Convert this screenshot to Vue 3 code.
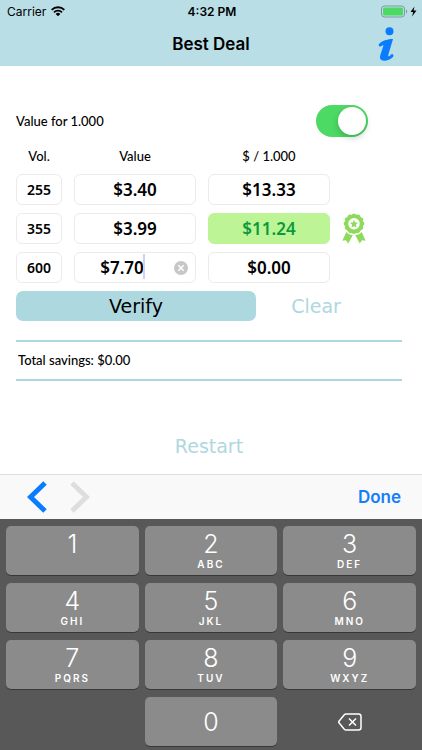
<template>
  <div class="screen">
    <header class="top">
      <div class="status">
        <span class="carrier">
          Carrier
          <svg width="14" height="11" viewBox="0 0 42 33" aria-hidden="true">
            <g fill="none" stroke="#000" stroke-width="5.5">
              <path d="M2 11.500A27 27 0 0 1 40 11.500" />
              <path d="M9 19A17 17 0 0 1 33 19" />
            </g>
            <path d="M14 24A10 10 0 0 1 28 24L21 31Z" />
          </svg>
        </span>
        <span class="time">4:32 PM</span>
        <span class="power">
          <svg width="36" height="13" viewBox="0 0 36 13" aria-hidden="true">
            <rect x="0.500" y="1" width="23" height="11" rx="3" fill="none" stroke="#7f999e" />
            <rect x="2" y="2.500" width="20" height="8" rx="1.500" fill="#4cd964" />
            <path d="M25 4.500C26.600 5 26.600 8 25 8.500Z" fill="#7f999e" />
            <path d="M33.500 1.500L29.500 7H32.200L31 11.500L35.500 5.500H32.600Z" />
          </svg>
        </span>
      </div>
      <div class="nav">
        <h1>Best Deal</h1>
        <button class="info" type="button" aria-label="Info">
          <svg width="16" height="34" viewBox="0 0 48 102" fill="#0a7cff">
            <circle cx="34.500" cy="13" r="12" />
            <path d="M2 53C8 43 25 36 45 36L31 83C30 88 32 89 36 86C39 83 41 80 44 82C47 84 47 88 44 91C37 98 28 101 19 101C7 101 4 94 7 84L15 60C17 54 16 53 12 56C6 60 1 58 2 53Z" />
          </svg>
        </button>
      </div>
    </header>

    <main>
      <div class="unit-row">
        <label for="unit">Value for 1.000</label>
        <input id="unit" v-model="perUnit" class="switch" type="checkbox" role="switch" />
      </div>

      <table>
        <colgroup>
          <col class="col-vol" />
          <col />
          <col />
          <col class="col-badge" />
        </colgroup>
        <thead>
          <tr>
            <th scope="col">Vol.</th>
            <th scope="col">Value</th>
            <th scope="col">$ / 1.000</th>
            <td></td>
          </tr>
        </thead>
        <tbody>
          <tr v-for="(row, i) in rows" :key="i">
            <td>
              <input v-model="row.vol" class="box vol" :aria-label="'Vol. ' + (i + 1)" />
            </td>
            <td>
              <div class="field">
                <input
                  v-model="row.value"
                  class="box"
                  :class="{ editing: i === active }"
                  :aria-label="'Value ' + (i + 1)"
                  @focus="active = i"
                />
                <template v-if="i === active">
                  <span class="caret"></span>
                  <button class="erase" type="button" aria-label="Erase" @click="row.value = ''">
                    <svg width="14" height="14" viewBox="0 0 14 14">
                      <circle cx="7" cy="7" r="7" fill="#c7c7c9" />
                      <path d="M4.300 4.300L9.700 9.700M9.700 4.300L4.300 9.700" stroke="#fff" stroke-width="1.500" />
                    </svg>
                  </button>
                </template>
              </div>
            </td>
            <td>
              <output class="box" :class="{ best: row.best }">{{ row.price }}</output>
            </td>
            <td>
              <svg v-if="row.best" class="rosette" width="24" height="31" viewBox="0 0 73 93" fill="#8edb5b" aria-hidden="true">
                <path d="M13 57L1 84L12 82L19 92L33 66C25 67 19 63 13 57Z" />
                <path d="M60 57L72 84L61 82L54 92L40 66C48 67 54 63 60 57Z" />
                <circle cx="36.500" cy="32" r="32" fill="#fff" />
                <circle cx="36.500" cy="32" r="29" />
                <circle v-for="(p, n) in petals" :key="n" :cx="p.x" :cy="p.y" r="6.5" />
                <circle cx="36.500" cy="32" r="17.500" fill="#fff" />
                <path d="M36.500 20L40 28L49 29L42.500 35L44 43.500L36.500 39.500L29 43.500L30.500 35L24 29L33 28Z" />
              </svg>
            </td>
          </tr>
        </tbody>
      </table>

      <div class="actions">
        <button class="verify" type="button">Verify</button>
        <button class="plain clear" type="button">Clear</button>
      </div>

      <p class="total">Total savings: $0.00</p>

      <button class="plain restart" type="button">Restart</button>
    </main>

    <div class="toolbar">
      <button type="button" aria-label="Previous" @click="move(-1)">
        <svg width="20" height="32" viewBox="0 0 20 32">
          <path d="M18 2L3.500 16L18 30" fill="none" stroke="#0a7cff" stroke-width="5" />
        </svg>
      </button>
      <button type="button" aria-label="Next" @click="move(1)">
        <svg width="20" height="32" viewBox="0 0 20 32">
          <path d="M2 2L16.500 16L2 30" fill="none" stroke="#dedede" stroke-width="5" />
        </svg>
      </button>
      <button class="done" type="button">Done</button>
    </div>

    <div class="keyboard">
      <button v-for="key in keys" :key="key.digit" class="key" type="button" @click="type(key.digit)">
        <span class="digit">{{ key.digit }}</span>
        <span class="letters">{{ key.letters }}</span>
      </button>
      <span></span>
      <button class="key zero" type="button" @click="type('0')">
        <span class="digit">0</span>
      </button>
      <button class="delete" type="button" aria-label="Delete" @click="erase">
        <svg width="24" height="18" viewBox="0 0 24 18" fill="none" stroke="#fff" stroke-width="1.500">
          <path d="M8 1H20.500Q23 1 23 3.500V14.500Q23 17 20.500 17H8Q7 17 6.300 16.200L1 9.800Q0.500 9 1 8.200L6.300 1.800Q7 1 8 1Z" />
          <path d="M11 5.500L18 12.500M18 5.500L11 12.500" />
        </svg>
      </button>
    </div>
  </div>
</template>

<script setup>
import { ref } from 'vue'

const perUnit = ref(true)
const active = ref(2)

const rows = ref([
  { vol: '255', value: '$3.40', price: '$13.33', best: false },
  { vol: '355', value: '$3.99', price: '$11.24', best: true },
  { vol: '600', value: '$7.70', price: '$0.00', best: false }
])

const keys = [
  { digit: '1', letters: '' },
  { digit: '2', letters: 'ABC' },
  { digit: '3', letters: 'DEF' },
  { digit: '4', letters: 'GHI' },
  { digit: '5', letters: 'JKL' },
  { digit: '6', letters: 'MNO' },
  { digit: '7', letters: 'PQRS' },
  { digit: '8', letters: 'TUV' },
  { digit: '9', letters: 'WXYZ' }
]

// scalloped edge of the rosette
const petals = Array.from({ length: 12 }, (_, n) => ({
  x: 36.5 + 25 * Math.cos((n * Math.PI) / 6),
  y: 32 + 25 * Math.sin((n * Math.PI) / 6)
}))

function move(step) {
  active.value = Math.min(rows.value.length - 1, Math.max(0, active.value + step))
}

function type(digit) {
  rows.value[active.value].value += digit
}

function erase() {
  const row = rows.value[active.value]
  row.value = row.value.slice(0, -1)
}
</script>

<style>
body {
  margin: 0;
  background: #fff;
}
</style>

<style scoped>
.screen {
  min-height: 100vh;
  display: flex;
  flex-direction: column;
  font-family: Inter, "Liberation Sans", sans-serif;
  color: #000;
}

button {
  font: inherit;
  color: inherit;
  background: none;
  border: none;
  padding: 0;
  cursor: pointer;
}

svg { display: block; }

.top { background: #b9dee6; }

.status {
  display: grid;
  grid-template-columns: 1fr auto 1fr;
  align-items: center;
  height: 22px;
  padding: 0 5px 0 7px;
  font-size: 12px;
}

.carrier {
  display: flex;
  align-items: center;
  gap: 5px;
}

.time { font-weight: 600; }
.power { justify-self: end; }

.nav {
  display: grid;
  grid-template-columns: 1fr auto 1fr;
  align-items: center;
  height: 44px;
  padding: 0 28px;
}

h1 {
  grid-column: 2;
  margin: 0;
  font-size: 17px;
  font-weight: 600;
}

.info { justify-self: end; }

main {
  flex: 1;
  padding: 39px 20px 0 16px;
  font-family: Lato, "Noto Sans", sans-serif;
  font-size: 13px;
  font-weight: 500;
}

.unit-row {
  display: flex;
  justify-content: space-between;
  align-items: center;
  padding-right: 34px;
}

.switch {
  appearance: none;
  width: 52px;
  height: 32px;
  margin: 0;
  padding: 2px;
  display: flex;
  justify-content: flex-start;
  border-radius: 16px;
  background: #e5e5ea;
}

.switch::before {
  content: "";
  width: 28px;
  height: 28px;
  border-radius: 50%;
  background: #fff;
  box-shadow: 0 3px 6px rgba(0, 0, 0, 0.2);
}

.switch:checked {
  justify-content: flex-end;
  background: #4cd964;
}

table {
  width: 100%;
  table-layout: fixed;
  border-collapse: collapse;
}

.col-vol { width: 58px; }
.col-badge { width: 60px; }

th {
  height: 37px;
  padding: 0 12px 0 0;
  font-weight: 500;
}

td {
  padding: 0 12px 8px 0;
  vertical-align: top;
}

.box {
  display: block;
  box-sizing: border-box;
  width: 100%;
  height: 31px;
  padding: 0 4px;
  border: 1px solid #ebebeb;
  border-radius: 6px;
  background: #fff;
  font-family: "Noto Sans", sans-serif;
  font-size: 17px;
  font-weight: 600;
  line-height: 29px;
  text-align: center;
  color: #000;
  outline: none;
}

.vol { font-size: 14px; }

.best {
  border-color: #bdf596;
  background: #bdf596;
  color: #0c9a3c;
}

.field { position: relative; }
.editing { padding-right: 30px; }

.caret {
  position: absolute;
  top: 2px;
  left: calc(50% + 8px);
  width: 2px;
  height: 25px;
  background: #ccd2f8;
}

.erase {
  position: absolute;
  top: 9px;
  right: 8px;
}

.actions {
  display: flex;
  padding-right: 26px;
  font-family: "DejaVu Sans", sans-serif;
  font-size: 19px;
}

.verify {
  flex: 2;
  height: 30px;
  border-radius: 7px;
  background: #aed8e0;
}

.plain { color: #aed8e0; }
.clear { flex: 1; }

.total {
  margin: 19px 0 0;
  padding: 0 2px;
  border: solid #aed8e0;
  border-width: 2px 0;
  line-height: 37px;
}

.restart {
  display: block;
  margin: 50px auto 0;
  font-family: "DejaVu Sans", sans-serif;
  font-size: 19px;
  line-height: 30px;
}

.toolbar {
  display: flex;
  align-items: center;
  gap: 23px;
  height: 44px;
  padding: 0 21px 0 27px;
  border-top: 1px solid #dcdcdc;
  background: #f9f9f9;
}

.done {
  margin-left: auto;
  font-size: 17px;
  font-weight: 600;
  color: #147efb;
}

.keyboard {
  display: grid;
  grid-template-columns: repeat(3, 1fr);
  grid-auto-rows: 49px;
  gap: 8px 6px;
  padding: 7px 6px 4px;
  background: #585858;
  color: #fff;
}

.key {
  display: flex;
  flex-direction: column;
  align-items: center;
  padding-top: 5px;
  border-radius: 5px;
  background: #8b8b8b;
  box-shadow: 0 1px 0 #383838;
}

.digit {
  font-size: 25px;
  font-weight: 300;
  line-height: 26px;
}

.letters {
  font-size: 10px;
  font-weight: 600;
  line-height: 14px;
  letter-spacing: 2px;
}

.zero {
  justify-content: center;
  padding-top: 0;
}

.delete {
  display: flex;
  align-items: center;
  justify-content: center;
}
</style>
